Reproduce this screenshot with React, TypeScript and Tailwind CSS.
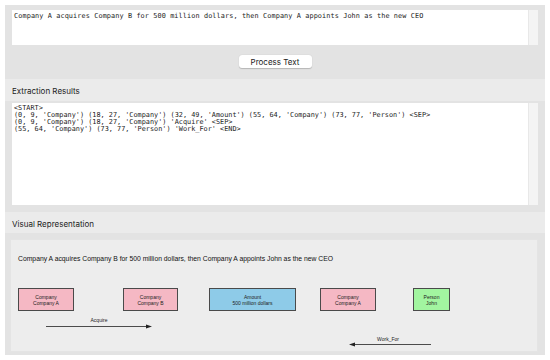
import React from 'react';

const mono = { fontFamily: '"DejaVu Sans Mono", monospace' };

const extraction = [
  '<START>',
  "(0, 9, 'Company') (18, 27, 'Company') (32, 49, 'Amount') (55, 64, 'Company') (73, 77, 'Person') <SEP>",
  "(0, 9, 'Company') (18, 27, 'Company') 'Acquire' <SEP>",
  "(55, 64, 'Company') (73, 77, 'Person') 'Work_For' <END>",
];

const nodes = [
  { label: 'Company', value: 'Company A', left: 'left-[7px]', width: 'w-[56px]', color: 'bg-[#f5b8c4]' },
  { label: 'Company', value: 'Company B', left: 'left-[112px]', width: 'w-[55px]', color: 'bg-[#f5b8c4]' },
  { label: 'Amount', value: '500 million dollars', left: 'left-[198px]', width: 'w-[87px]', color: 'bg-[#8ecbe8]' },
  { label: 'Company', value: 'Company A', left: 'left-[309px]', width: 'w-[56px]', color: 'bg-[#f5b8c4]' },
  { label: 'Person', value: 'John', left: 'left-[402px]', width: 'w-[37px]', color: 'bg-[#a2f5a0]' },
];

function TextBox({ height, size, children }: { height: string; size: string; children: React.ReactNode }) {
  return (
    <div className={`flex ${height}`}>
      <div className={`flex-1 bg-white px-[2px] pt-[2px] ${size} leading-[7px] text-[#1a1a1a] whitespace-pre overflow-hidden`} style={mono}>
        {children}
      </div>
      <div className="w-[10px] bg-[#f4f4f4] border-l border-[#e8e8e8]" />
    </div>
  );
}

function SectionHeader({ title, height }: { title: string; height: string }) {
  return (
    <div className={`${height} bg-[#ebebeb] pl-[7px] pt-[7px] text-[8px] leading-[10px] text-[#222]`}>
      {title}
    </div>
  );
}

export default function App() {
  return (
    <div
      className="w-[550px] h-[360px] bg-white px-[5px] pt-[5px] flex flex-col overflow-hidden"
      style={{ fontFamily: 'Inter, "Liberation Sans", sans-serif' }}
    >
      {/* Input */}
      <div className="h-[74px] bg-[#e3e3e3] px-[7px] pt-[5px] flex flex-col">
        <TextBox height="h-[35px]" size="text-[6.85px] tracking-[0.1px]">
          <div className="pt-[1px]">
            Company A acquires Company B for 500 million dollars, then Company A appoints John as the new CEO
          </div>
        </TextBox>
        <button className="mt-[10px] mx-auto w-[73px] h-[13px] bg-white rounded-[3px] shadow-[0_0.5px_1px_rgba(0,0,0,0.2)] text-[8px] text-[#222] flex items-center justify-center">
          Process Text
        </button>
      </div>

      <SectionHeader title="Extraction Results" height="h-[22px]" />

      <div className="bg-[#e3e3e3] px-[7px] pt-[2px] pb-[7px]">
        <TextBox height="h-[102px]" size="text-[6.85px]">
          {extraction.map((line) => (
            <div key={line}>{line}</div>
          ))}
        </TextBox>
      </div>

      <SectionHeader title="Visual Representation" height="h-[21px]" />

      <div className="bg-[#e3e3e3] pl-[5px] pr-[7px] pt-[6px] pb-[3px]">
        <div className="relative h-[113px] bg-[#ededed] border border-[#e4e4e4]" style={{ fontFamily: '"Liberation Sans", Arial, sans-serif' }}>
          <div className="pl-[7px] pt-[15px] text-[6.8px] leading-[8px] text-[#111]">
            Company A acquires Company B for 500 million dollars, then Company A appoints John as the new CEO
          </div>

          {nodes.map((n, i) => (
            <div
              key={i}
              className={`absolute top-[48px] h-[23px] ${n.left} ${n.width} ${n.color} border border-[#4a4a4a] flex flex-col items-center justify-center text-[5px] leading-[6px] text-[#222]`}
            >
              <span>{n.label}</span>
              <span>{n.value}</span>
            </div>
          ))}

          <div className="absolute left-[78px] top-[77px] w-[20px] text-center text-[5px] leading-[6px] text-[#222]">Acquire</div>
          <div className="absolute left-[365px] top-[96px] w-[24px] text-center text-[5px] leading-[6px] text-[#222]">Work_For</div>

          <svg className="absolute left-0 top-0" width="530" height="113">
            <line x1="35" y1="86.5" x2="137" y2="86.5" stroke="#222" strokeWidth="0.8" />
            <polygon points="141,86.5 135,84.5 135,88.5" fill="#222" />
            <line x1="342" y1="104.5" x2="420" y2="104.5" stroke="#222" strokeWidth="0.8" />
            <polygon points="338,104.5 344,102.5 344,106.5" fill="#222" />
          </svg>
        </div>
      </div>
    </div>
  );
}
